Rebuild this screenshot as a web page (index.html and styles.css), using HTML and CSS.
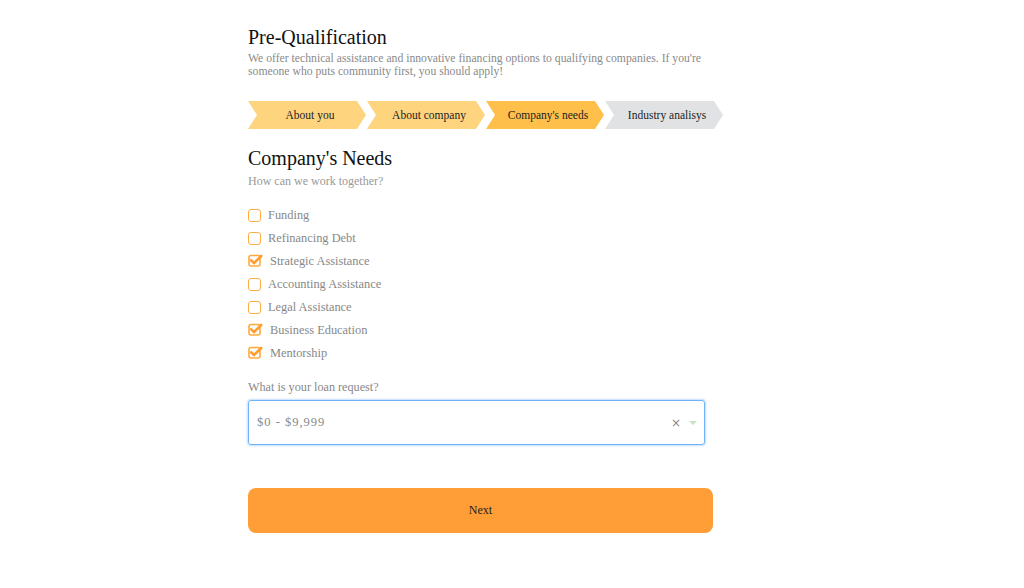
FILE: index.html
```html
<!DOCTYPE html>
<html>
<head>
<meta charset="utf-8">
<link rel="stylesheet" href="styles.css">
</head>
<body>
<main class="page">
  <h1 class="title">Pre-Qualification</h1>
  <p class="lead">We offer technical assistance and innovative financing options to qualifying companies. If you're someone who puts community first, you should apply!</p>

  <nav class="steps">
    <div class="step done">About you</div>
    <div class="step done">About company</div>
    <div class="step active">Company's needs</div>
    <div class="step todo">Industry analisys</div>
  </nav>

  <h2 class="section">Company's Needs</h2>
  <p class="sub">How can we work together?</p>

  <ul class="checks">
    <li class="check"><span class="box"></span><span class="label">Funding</span></li>
    <li class="check"><span class="box"></span><span class="label">Refinancing Debt</span></li>
    <li class="check on"><svg class="tick" width="15" height="13" viewBox="0 0 15 13"><rect x="1" y="1.5" width="11" height="10.5" rx="2" fill="none" stroke="#ffaa3b" stroke-width="1.6"/><path d="M3.3 6.3 L6 9.2 L13.2 2" fill="none" stroke="#ff9d2e" stroke-width="2.6" stroke-linecap="round" stroke-linejoin="round"/></svg><span class="label">Strategic Assistance</span></li>
    <li class="check"><span class="box"></span><span class="label">Accounting Assistance</span></li>
    <li class="check"><span class="box"></span><span class="label">Legal Assistance</span></li>
    <li class="check on"><svg class="tick" width="15" height="13" viewBox="0 0 15 13"><rect x="1" y="1.5" width="11" height="10.5" rx="2" fill="none" stroke="#ffaa3b" stroke-width="1.6"/><path d="M3.3 6.3 L6 9.2 L13.2 2" fill="none" stroke="#ff9d2e" stroke-width="2.6" stroke-linecap="round" stroke-linejoin="round"/></svg><span class="label">Business Education</span></li>
    <li class="check on"><svg class="tick" width="15" height="13" viewBox="0 0 15 13"><rect x="1" y="1.5" width="11" height="10.5" rx="2" fill="none" stroke="#ffaa3b" stroke-width="1.6"/><path d="M3.3 6.3 L6 9.2 L13.2 2" fill="none" stroke="#ff9d2e" stroke-width="2.6" stroke-linecap="round" stroke-linejoin="round"/></svg><span class="label">Mentorship</span></li>
  </ul>

  <p class="question">What is your loan request?</p>
  <div class="select">
    <span class="value">$0 - $9,999</span>
    <span class="clear">×</span>
    <span class="caret"></span>
  </div>

  <button class="next">Next</button>
</main>
</body>
</html>
```

FILE: styles.css
```css
* { box-sizing: border-box; }
html, body { margin: 0; padding: 0; background: #fff; }
body { font-family: "Liberation Serif", "Times New Roman", serif; }

.page {
  width: 476px;
  margin-left: 248px;
  padding-top: 25px;
}

.title {
  margin: 0;
  font-size: 20px;
  font-weight: normal;
  color: #111;
  line-height: 24px;
}

.lead {
  margin: 3px 0 0;
  width: 470px;
  font-size: 11.7px;
  line-height: 13px;
  color: #8a8a8a;
}

.steps {
  display: flex;
  gap: 1px;
  margin-top: 23px;
}

.step {
  width: 118px;
  height: 28px;
  display: flex;
  align-items: center;
  justify-content: center;
  padding-left: 6px;
  font-size: 11.5px;
  color: #222;
  clip-path: polygon(0 0, calc(100% - 9px) 0, 100% 50%, calc(100% - 9px) 100%, 0 100%, 9px 50%);
}
.step.done { background: #ffd47f; }
.step.active { background: #ffc04b; }
.step.todo { background: #e1e2e3; }

.section {
  margin: 18px 0 0;
  font-size: 20px;
  font-weight: normal;
  color: #111;
  line-height: 22px;
}

.sub {
  margin: 5px 0 0;
  font-size: 12px;
  line-height: 14px;
  color: #999;
}

.checks {
  list-style: none;
  margin: 20px 0 0;
  padding: 0;
  display: flex;
  flex-direction: column;
  gap: 9px;
}

.check {
  display: flex;
  align-items: center;
  height: 14px;
  font-size: 12.4px;
  color: #888;
}

.box {
  width: 13px;
  height: 13px;
  border: 1.5px solid #ffae45;
  border-radius: 3px;
  margin-right: 7px;
}

.tick { margin-right: 7px; margin-top: -1px; }

.question {
  margin: 20px 0 0;
  font-size: 12.2px;
  line-height: 14px;
  color: #888;
}

.select {
  margin-top: 6px;
  width: 457px;
  height: 45px;
  border: 1px solid #6fb2f7;
  border-radius: 3px;
  box-shadow: 0 0 2px 1px rgba(120, 180, 250, 0.45);
  display: flex;
  align-items: center;
  padding: 0 7px 0 8px;
  font-size: 12.5px;
  letter-spacing: 1px;
  color: #888;
}
.select .value { flex: 1; }
.select .clear {
  font-family: "DejaVu Sans", sans-serif;
  font-size: 12px;
  letter-spacing: 0;
  color: #888;
  margin-right: 8px;
}
.select .caret {
  width: 0;
  height: 0;
  border-left: 4px solid transparent;
  border-right: 4px solid transparent;
  border-top: 4px solid #c8e3c3;
}

.next {
  display: block;
  margin-top: 43px;
  width: 465px;
  height: 45px;
  border: none;
  border-radius: 8px;
  background: #ff9d36;
  font-family: "Liberation Serif", "Times New Roman", serif;
  font-size: 12px;
  color: #222;
}
```
